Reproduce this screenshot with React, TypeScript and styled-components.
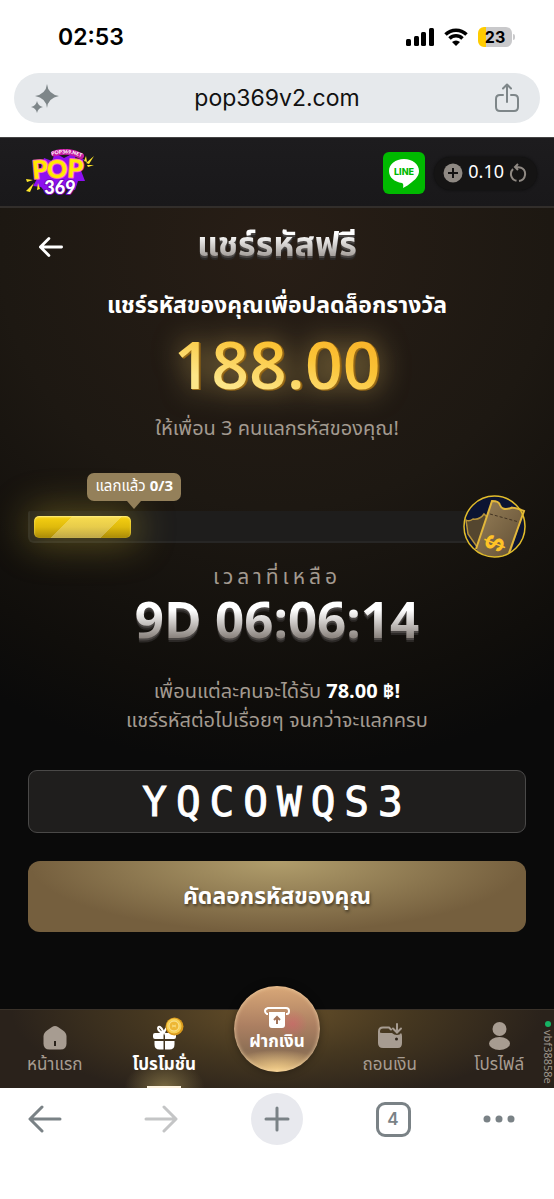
import React from "react";
import styled, { createGlobalStyle, css } from "styled-components";

const GlobalStyle = createGlobalStyle`
  * { box-sizing: border-box; }
  body {
    margin: 0;
    background: #fff;
    font-family: "Noto Sans Thai", "Noto Sans", sans-serif;
  }
  button, input { font: inherit; border: 0; padding: 0; background: none; color: inherit; }
  svg { display: block; }
`;

const Phone = styled.div`
  display: flex;
  flex-direction: column;
  min-height: 100vh;
`;

/* Device and browser chrome */
const StatusBar = styled.div`
  display: flex;
  align-items: center;
  justify-content: space-between;
  height: 73px;
  padding: 0 42px 0 58px;
  color: #000;
`;
const Clock = styled.time`
  font: 600 23px/28px Inter, sans-serif;
`;
const StatusIcons = styled.div`
  display: flex;
  align-items: center;
  gap: 10px;
`;
const Battery = styled.div`
  position: relative;
  width: 34px;
  height: 20px;
  border-radius: 6px;
  background: linear-gradient(90deg, #ffcc00 23%, #c9c9cb 23%);
  font: 700 16px/20px Inter, sans-serif;
  text-align: center;
  &::after {
    content: "";
    position: absolute;
    left: 100%;
    top: 7px;
    width: 2px;
    height: 6px;
    margin-left: 1px;
    border-radius: 0 2px 2px 0;
    background: #c9c9cb;
  }
`;
const AddressBar = styled.div`
  display: flex;
  align-items: center;
  justify-content: space-between;
  height: 50px;
  margin: 0 14px 14px;
  padding: 0 21px 0 17px;
  border-radius: 25px;
  background: #e6e9ec;
  color: #7e8689;
`;
const AddressInput = styled.input`
  flex: 1;
  min-width: 0;
  text-align: center;
  color: #111;
  outline: none;
  font: 400 23px/32px Inter, sans-serif;
`;
const IconButton = styled.button`
  display: grid;
  place-items: center;
  color: inherit;
`;
const BrowserBar = styled.div`
  display: grid;
  grid-template-columns: 90px 1fr 90px 1fr 70px;
  align-items: start;
  justify-items: center;
  height: 111px;
  padding: 5px 20px 0 0;
  background: #fff;
`;
const BrowserButton = styled.button<{ $filled?: boolean; $dim?: boolean }>`
  display: grid;
  place-items: center;
  width: 52px;
  height: 52px;
  border-radius: 50%;
  background: ${(p) => (p.$filled ? "#e8e9ee" : "none")};
  color: ${(p) => (p.$dim ? "#c4c5c6" : "#7a8286")};
`;
const TabCount = styled.span`
  display: grid;
  place-items: center;
  width: 35px;
  height: 35px;
  border: 3px solid #7a8286;
  border-radius: 9px;
  font: 600 17px/20px Inter, sans-serif;
`;

/* Site */
const Site = styled.div`
  position: relative;
  display: flex;
  flex: 1;
  flex-direction: column;
  background: #0a0a0a;
`;
const Header = styled.header`
  display: flex;
  align-items: center;
  height: 71px;
  padding: 2px 17px 0 25px;
  border-bottom: 2px solid #322e2b;
  border-top: 1px solid #444;
  background: linear-gradient(#1d1c1e, #19181a);
`;
const LineLink = styled.a`
  margin-left: auto;
  margin-right: 9px;
`;
const Balance = styled.div`
  display: flex;
  align-items: center;
  gap: 5px;
  height: 33px;
  padding: 0 10px 0 9px;
  border-radius: 17px;
  background: #151414;
  box-shadow: 0 0 3px #0c0c0c;
  color: #8f8983;
`;
const BalanceValue = styled.span`
  color: #fff;
  font-size: 18px;
  line-height: 24px;
`;
const Main = styled.main`
  display: flex;
  flex: 1;
  flex-direction: column;
  padding: 0 28px;
  text-align: center;
  color: #a39a90;
  background: radial-gradient(ellipse 100% 520px at 50% 40px, #281e16 0, #1d1812 50%, #100e0b 85%, #0a0a0a 100%);
`;
const TitleRow = styled.div`
  display: grid;
  grid-template-columns: 46px 1fr 46px;
  align-items: center;
  height: 78px;
  color: #fff;
`;
const silver = css`
  color: transparent;
  background: linear-gradient(#fff 28%, #7d756f 82%);
  -webkit-background-clip: text;
  background-clip: text;
  filter: drop-shadow(0 2px 0 #4a4644) drop-shadow(0 2px 0 #2b2826);
`;
const Title = styled.h1`
  margin: 0 auto;
  padding-bottom: 2px;
  font-size: 34px;
  font-weight: 700;
  line-height: 56px;
  ${silver}
`;
const Lead = styled.h2`
  margin: 4px 0 0;
  color: #fff;
  font-size: 23px;
  font-weight: 700;
  line-height: 32px;
`;
const Prize = styled.p`
  margin: 0 auto 11px;
  font-family: "Open Sans", "Noto Sans", sans-serif;
  font-size: 66px;
  font-weight: 600;
  line-height: 82px;
  color: transparent;
  background: linear-gradient(15deg, #fce588 25%, #fbc437 60%, #f9b62c 80%);
  -webkit-background-clip: text;
  background-clip: text;
  filter: drop-shadow(1px 1px 0 #9a6c18) drop-shadow(1px 0 0 #8a5e12) drop-shadow(0 0 14px rgba(222, 186, 100, 0.6));
`;
const Note = styled.p`
  margin: 0;
  font-size: 20px;
  line-height: 29px;
  strong { color: #fff; font-weight: 700; }
`;
const Progress = styled.div`
  display: flex;
  align-items: center;
  height: 63px;
  margin-top: 51px;
`;
const Track = styled.div`
  flex: 1;
  height: 32px;
  margin-right: -32px;
  padding: 5px 4px;
  border: 1px solid #272625;
  border-width: 0 0 2px 2px;
  border-radius: 2px 0 0 6px;
  background: #1e1d1c;
`;
const Fill = styled.div`
  position: relative;
  width: 97px;
  height: 22px;
  border-radius: 5px;
  background:
    linear-gradient(135deg, transparent 32%, rgba(255, 255, 255, 0.26) 32%, rgba(255, 255, 255, 0.26) 74%, transparent 74%),
    linear-gradient(#f7d112, #dfba0c 50%, #a98a08);
  box-shadow: inset 0 1px 2px #fff08a, 0 0 36px 8px rgba(184, 164, 50, 0.38);
`;
const Bubble = styled.div`
  position: absolute;
  right: -50px;
  bottom: 37px;
  height: 28px;
  padding: 0 8px;
  border-radius: 7px;
  background: #94805a;
  color: #fff;
  font-size: 15px;
  line-height: 28px;
  white-space: nowrap;
  &::after {
    content: "";
    position: absolute;
    left: 50%;
    top: 100%;
    margin-left: -7px;
    border: 7px solid transparent;
    border-top: 8px solid #94805a;
    border-bottom: 0;
  }
`;
const TimeLabel = styled.p`
  margin: 4px 0 0;
  font-size: 21px;
  line-height: 32px;
  letter-spacing: 4px;
`;
const Countdown = styled.time`
  margin: 0 auto 27px;
  font-size: 51px;
  font-weight: 700;
  line-height: 57px;
  ${silver}
`;
const CodeBox = styled.input`
  width: 100%;
  height: 63px;
  margin: 34px 0 28px;
  border: 1px solid #4a4948;
  border-radius: 9px;
  background: #1f1e1d;
  color: #fff;
  outline: none;
  text-align: center;
  font: 400 41px/56px "DejaVu Sans Mono", monospace;
  letter-spacing: 9px;
  -webkit-text-stroke: 1px #fff;
`;
const CopyButton = styled.button`
  height: 71px;
  border-radius: 12px;
  background: radial-gradient(ellipse 50% 100% at 50% 0, #b19e6c, #755f3e);
  color: #fff;
  font-size: 23px;
  font-weight: 700;
  text-shadow: 1px 2px 3px rgba(0, 0, 0, 0.5);
`;
const Nav = styled.nav`
  display: grid;
  grid-template-columns: 1fr 1fr 116px 1fr 1fr;
  height: 79px;
  border-top: 1px solid #3a322a;
  background: radial-gradient(ellipse 48% 120% at 50% 0, #67502a, #453720 50%, #2a221b);
`;
const NavItem = styled.a<{ $active?: boolean }>`
  display: flex;
  flex-direction: column;
  align-items: center;
  justify-content: space-between;
  padding-top: 8px;
  color: ${(p) => (p.$active ? "#fff" : "#a79c91")};
  font-size: 17px;
  font-weight: ${(p) => (p.$active ? 700 : 400)};
  line-height: 26px;
  text-decoration: none;
  background: ${(p) => (p.$active ? "radial-gradient(ellipse 40px 28px at 50% 100%, #7a6a41, transparent)" : "none")};
  &::after {
    content: "";
    width: 34px;
    height: 2px;
    background: ${(p) => (p.$active ? "#fff4e0" : "none")};
  }
`;
const NavLabel = styled.span`
  margin-bottom: 8px;
`;
const Deposit = styled.a`
  display: flex;
  flex-direction: column;
  align-items: center;
  justify-self: center;
  gap: 1px;
  width: 86px;
  height: 86px;
  margin-top: -24px;
  padding-top: 21px;
  border-radius: 50%;
  background:
    radial-gradient(circle at 68% 44%, rgba(222, 90, 110, 0.45), transparent 20%),
    radial-gradient(ellipse 60% 26% at 50% 100%, #f7d28c, transparent),
    linear-gradient(#d9a878, #ad8062 45%, #8d6f55 75%, #b08c60);
  box-shadow: inset 0 0 4px #f3d4a8, 0 0 8px rgba(0, 0, 0, 0.4);
  color: #fff;
  font-size: 17px;
  font-weight: 700;
  line-height: 24px;
  text-decoration: none;
`;
const BuildTag = styled.small`
  position: absolute;
  right: 0;
  bottom: 4px;
  display: flex;
  align-items: center;
  gap: 3px;
  writing-mode: vertical-rl;
  color: #9d958c;
  font-size: 11px;
  line-height: 13px;
  &::before {
    content: "";
    width: 6px;
    height: 6px;
    border-radius: 50%;
    background: #16b364;
  }
`;

const Arrow = ({ flip, size = 34, w = 3 }: { flip?: boolean; size?: number; w?: number }) => (
  <svg width={size} height={size} viewBox="0 0 34 34" fill="none" stroke="currentColor" strokeWidth={w} strokeLinecap="round" strokeLinejoin="round">
    {flip ? <path d="M2 17h29M20 5l12 12-12 12" /> : <path d="M32 17H3M14 5L2 17l12 12" />}
  </svg>
);

const Logo = () => (
  <svg width="70" height="48" viewBox="0 0 70 48" role="img" aria-label="POP 369">
    <path d="M19 9l8 3 3-8 9 5 12-6-1 8 9-1-4 9 5 13-7 0-3 9-10-2-18 6-6-7-8-1 4-7z" fill="#8d10f0" />
    <path d="M29 4.500Q43 0 56 7" fill="none" stroke="#c31ba0" strokeWidth="6" strokeLinecap="round" />
    <path id="logo-arc" d="M27 6.500Q43 1 59 9.500" fill="none" />
    <text fill="#fff" fontSize="5" fontWeight="900" fontFamily="Lato, sans-serif"><textPath href="#logo-arc">POP369.NET</textPath></text>
    <g fontFamily="Lato, sans-serif" fontWeight="900" strokeLinejoin="round" paintOrder="stroke">
      <g fontSize="25" fill="#ffe900" stroke="#ff6fb0" strokeWidth="2">
        <text x="8" y="30" transform="rotate(-5 8 30)">P</text>
        <text x="22" y="29">O</text>
        <text x="42" y="28" transform="rotate(4 42 28)">P</text>
      </g>
      <text x="35" y="45" textAnchor="middle" fontSize="18" fill="#fff" stroke="#7207bd" strokeWidth="2">369</text>
    </g>
    <path d="M59 12l2-5 1 6zM61 14l8-7-5 8zM62 16l7 0-6 2zM1 30l7 1-6 2zM1 42l8-8-4 9zM12 41l1-7 2 6z" fill="#ffe82a" />
  </svg>
);

const LineIcon = () => (
  <svg width="42" height="42" viewBox="0 0 42 42" role="img" aria-label="LINE">
    <rect width="42" height="42" rx="6" fill="#00b900" />
    <path d="M21 7c8.500 0 15 5.300 15 12 0 4.500-3 8-7 11-3 2.500-6 4.700-9 6 .4-2 .7-4.500-1-5C11.500 30 6 25.500 6 19 6 12.300 12.500 7 21 7z" fill="#fff" />
    <text x="21" y="23" textAnchor="middle" fontFamily="Inter, sans-serif" fontSize="9" fontWeight="800" fill="#00b900">LINE</text>
  </svg>
);

const TicketArt = styled.svg`
  position: relative;
`;
const TicketIcon = () => (
  <TicketArt width="63" height="63" viewBox="0 0 63 63" aria-hidden="true">
    <defs>
      <linearGradient id="ticket" x1="0" y1="0" x2="1" y2="1">
        <stop offset="0" stopColor="#9a825a" />
        <stop offset="1" stopColor="#5c4a31" />
      </linearGradient>
      <clipPath id="coin"><circle cx="31.500" cy="31.500" r="30" /></clipPath>
    </defs>
    <circle cx="31.500" cy="31.500" r="30" fill="#0c1432" />
    <g clipPath="url(#coin)">
      <path d="M3 25q3 2 7-1 7 1 11-5l6 6-8 34-14-20z" fill="#54462f" stroke="#b8943a" strokeWidth="1.500" />
      <path d="M29 6L10 66l34 4 17-55z" fill="url(#ticket)" />
      <path d="M31 4L29 6q7 0 8 4 2 6 11 3V2z" fill="#0c1432" />
    </g>
    <path d="M13 54L29 6q7 0 8 4 2 6 11 3 3-1 13 3L46 58" fill="none" stroke="#e2b73b" strokeWidth="2" />
    <path d="M27 19l29 8" stroke="#423322" strokeDasharray="3 2" />
    <circle cx="31.500" cy="31.500" r="30.500" fill="none" stroke="#e2bd2c" strokeWidth="1.500" />
    <text x="0" y="8" textAnchor="middle" transform="translate(31 48) rotate(112)" fontFamily="Inter, sans-serif" fontSize="24" fontWeight="700" fill="#ffc326">$</text>
  </TicketArt>
);

const HomeIcon = () => (
  <svg width="34" height="34" viewBox="0 0 34 34" fill="currentColor">
    <path d="M14 9q3-2 6 0l5 3.500q3.500 2.500 3.500 6v7q0 6-6 6h-11q-6 0-6-6v-7q0-3.500 3.500-6z" />
    <path d="M17 23v5" stroke="#2a221b" strokeWidth="2" />
  </svg>
);

const GiftIcon = () => (
  <svg width="34" height="34" viewBox="0 0 34 34" fill="currentColor" overflow="visible">
    <path d="M7.500 23h9v8.500h-4q-5 0-5-5zM18 23h9.500v3.500q0 5-5 5H18zM6 17q0-2 2-2h8.500v6H8q-2 0-2-2zM18 15h8q3 0 3 2v2q0 2-2 2h-9z" />
    <path d="M16 15c-6-2-6-7-3-6 2 1 3 4 4 6 1-3 2-6 4-6" fill="none" stroke="currentColor" strokeWidth="2" />
    <circle cx="27.500" cy="8.500" r="9" fill="#d99a1c" />
    <circle cx="27" cy="8" r="7.500" fill="#f7cf52" />
    <circle cx="27" cy="8" r="5" fill="#edb736" stroke="#fbe596" />
    <path d="M25 9l4-2M25 7l4 2" stroke="#f9dc7a" />
  </svg>
);

const WalletIcon = () => (
  <svg width="34" height="34" viewBox="0 0 34 34" fill="currentColor">
    <path d="M6 16v-2.500Q6 9.500 10 9.500h6l2 2M24 6v8M20 10.500l4 4 4-4" fill="none" stroke="currentColor" strokeWidth="2" strokeLinecap="round" />
    <path d="M5 13q1 2 4 2h10q2 2 5 2t4-2q1 1 1 3v7q0 5-4 5H10q-5 0-5-5z" />
    <circle cx="23.500" cy="21" r="1.500" fill="#2f251b" />
  </svg>
);

const UserIcon = () => (
  <svg width="34" height="34" viewBox="0 0 34 34" fill="currentColor">
    <circle cx="17.500" cy="11" r="7" />
    <ellipse cx="17.500" cy="25.500" rx="10.500" ry="6.500" />
  </svg>
);

export default function App() {
  return (
    <Phone>
      <GlobalStyle />
      <StatusBar>
        <Clock>02:53</Clock>
        <StatusIcons>
          <svg width="28" height="18" viewBox="0 0 28 18">
            <rect x="0" y="11" width="5" height="7" rx="1.500" />
            <rect x="8" y="8" width="5" height="10" rx="1.500" />
            <rect x="15" y="4" width="5" height="14" rx="1.500" />
            <rect x="23" y="0" width="5" height="18" rx="1.500" />
          </svg>
          <svg width="24" height="18" viewBox="0 0 24 18" fill="none" stroke="#000" strokeWidth="3.500">
            <path d="M1.500 6.500a15 15 0 0 1 21 0M5.500 10.500a9.300 9.300 0 0 1 13 0" />
            <path d="M12 18l-4-4a6 6 0 0 1 8 0z" fill="#000" stroke="none" />
          </svg>
          <Battery>23</Battery>
        </StatusIcons>
      </StatusBar>
      <AddressBar>
        <IconButton aria-label="Assistant">
          <svg width="28" height="30" viewBox="0 0 28 30" fill="currentColor">
            <path d="M16 1q1 10 12 12-11 2-12 12-1-10-12-12 11-2 12-12zM6 18q1 5 6 6-5 1-6 6-1-5-6-6 5-1 6-6z" />
          </svg>
        </IconButton>
        <AddressInput aria-label="Address" defaultValue="pop369v2.com" />
        <IconButton aria-label="Share">
          <svg width="24" height="30" viewBox="0 0 24 30" fill="none" stroke="currentColor" strokeWidth="2" strokeLinecap="round" strokeLinejoin="round">
            <path d="M8 12H5q-4 0-4 4v8q0 4 4 4h14q4 0 4-4v-8q0-4-4-4h-3M12 19V2M8 5.500l4-4 4 4" />
          </svg>
        </IconButton>
      </AddressBar>

      <Site>
        <Header>
          <Logo />
          <LineLink href="#line"><LineIcon /></LineLink>
          <Balance>
            <IconButton aria-label="Top up">
              <svg width="20" height="20" viewBox="0 0 20 20">
                <circle cx="10" cy="10" r="9.500" fill="currentColor" />
                <path d="M10 5v10M5 10h10" stroke="#131212" strokeWidth="2" />
              </svg>
            </IconButton>
            <BalanceValue>0.10</BalanceValue>
            <IconButton aria-label="Refresh">
              <svg width="18" height="20" viewBox="0 0 18 20" fill="none" stroke="currentColor" strokeWidth="2">
                <path d="M4 6a7 7 0 0 0 3.500 11.800M10 18a7 7 0 0 0 2-13.300Q10 4 6.500 4M9 1L6 4l3 3" />
              </svg>
            </IconButton>
          </Balance>
        </Header>

        <Main>
          <TitleRow>
            <IconButton aria-label="Back"><Arrow size={24} w={4} /></IconButton>
            <Title>แชร์รหัสฟรี</Title>
          </TitleRow>
          <Lead>แชร์รหัสของคุณเพื่อปลดล็อกรางวัล</Lead>
          <Prize>188.00</Prize>
          <Note>ให้เพื่อน 3 คนแลกรหัสของคุณ!</Note>

          <Progress>
            <Track role="progressbar" aria-valuemin={0} aria-valuemax={3} aria-valuenow={0}>
              <Fill>
                <Bubble>แลกแล้ว <b>0/3</b></Bubble>
              </Fill>
            </Track>
            <TicketIcon />
          </Progress>

          <TimeLabel>เวลาที่เหลือ</TimeLabel>
          <Countdown>9D 06:06:14</Countdown>
          <Note>เพื่อนแต่ละคนจะได้รับ <strong>78.00 ฿!</strong></Note>
          <Note>แชร์รหัสต่อไปเรื่อยๆ จนกว่าจะแลกครบ</Note>
          <CodeBox readOnly aria-label="รหัสของคุณ" value="YQCOWQS3" />
          <CopyButton>คัดลอกรหัสของคุณ</CopyButton>
        </Main>

        <Nav>
          <NavItem href="#home"><HomeIcon /><NavLabel>หน้าแรก</NavLabel></NavItem>
          <NavItem href="#promotion" $active><GiftIcon /><NavLabel>โปรโมชั่น</NavLabel></NavItem>
          <Deposit href="#deposit">
            <svg width="26" height="22" viewBox="0 0 26 22">
              <path d="M4 7H3Q1 6 1 4t3-3h18q3 0 3 3t-2 3h-1" fill="none" stroke="#fff" strokeWidth="2" />
              <path d="M5 5h16v13q0 3-3 3H8q-3 0-3-3z" fill="#fff" />
              <path d="M13 17v-6M10 13l3-3 3 3" fill="none" stroke="#a3745a" strokeWidth="2" />
            </svg>
            ฝากเงิน
          </Deposit>
          <NavItem href="#withdraw"><WalletIcon /><NavLabel>ถอนเงิน</NavLabel></NavItem>
          <NavItem href="#profile"><UserIcon /><NavLabel>โปรไฟล์</NavLabel></NavItem>
        </Nav>
        <BuildTag>vbf38858e</BuildTag>
      </Site>

      <BrowserBar>
        <BrowserButton aria-label="Back"><Arrow /></BrowserButton>
        <BrowserButton aria-label="Forward" $dim><Arrow flip /></BrowserButton>
        <BrowserButton aria-label="New tab" $filled>
          <svg width="26" height="26" viewBox="0 0 26 26" stroke="currentColor" strokeWidth="3" strokeLinecap="round"><path d="M13 2v22M2 13h22" /></svg>
        </BrowserButton>
        <BrowserButton aria-label="Tabs"><TabCount>4</TabCount></BrowserButton>
        <BrowserButton aria-label="More">
          <svg width="32" height="8" viewBox="0 0 32 8" fill="currentColor"><circle cx="4" cy="4" r="3.500" /><circle cx="16" cy="4" r="3.500" /><circle cx="28" cy="4" r="3.500" /></svg>
        </BrowserButton>
      </BrowserBar>
    </Phone>
  );
}
